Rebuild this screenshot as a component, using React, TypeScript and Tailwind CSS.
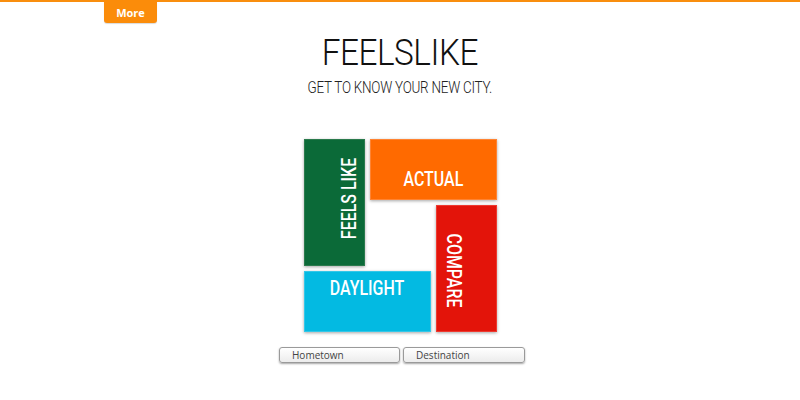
import React from "react";

export default function App() {
  return (
    <div className="relative h-[400px] w-[800px] overflow-hidden bg-white" style={{ fontFamily: "Roboto, sans-serif" }}>
      <div className="h-[2px] w-full bg-[#f98e0e]" />
      <div className="absolute left-[104px] top-0 flex h-[23px] w-[53px] items-center justify-center rounded-b-[3px] bg-[#fb8c0a] pt-[3px] text-[11px] font-bold text-white shadow-[0_1px_1px_rgba(0,0,0,0.15)]" style={{ fontFamily: "'Open Sans', sans-serif" }}>
        More
      </div>
      <div className="flex flex-col items-center pt-[29px]">
        <h1 className="scale-x-[0.9] text-[37px] font-light leading-[44px] tracking-[-0.5px] text-[#111]">FEELSLIKE</h1>
        <p className="mt-[2px] scale-x-[0.79] text-[17px] font-light leading-[20px] tracking-[-0.3px] text-[#222]">GET TO KNOW YOUR NEW CITY.</p>
        <div className="mt-[42px] grid grid-cols-[61px_61px_61px] grid-rows-[61px_61px_61px] gap-[5px]">
          <div className="col-start-1 row-span-2 row-start-1 flex items-center justify-center border border-[#2a7a4c] bg-[#0b6a38] shadow-[0_1px_3px_rgba(0,0,0,0.35)]">
            <span className="translate-x-[15px] -translate-y-[4px] -rotate-90 scale-x-[0.76] whitespace-nowrap text-[21px] font-medium leading-none text-white">FEELS LIKE</span>
          </div>
          <div className="col-span-2 col-start-2 row-start-1 flex items-center justify-center border border-[#ff8433] bg-[#ff6a00] shadow-[0_1px_3px_rgba(0,0,0,0.35)]">
            <span className="mt-[20px] scale-x-[0.76] text-[21px] font-medium leading-none text-white">ACTUAL</span>
          </div>
          <div className="col-start-3 row-span-2 row-start-2 flex items-center justify-center border border-[#ee3a30] bg-[#e3140a] shadow-[0_1px_3px_rgba(0,0,0,0.35)]">
            <span className="-translate-x-[12px] translate-y-[2px] rotate-90 scale-x-[0.76] whitespace-nowrap text-[21px] font-medium leading-none text-white">COMPARE</span>
          </div>
          <div className="col-span-2 col-start-1 row-start-3 flex items-start justify-center border border-[#33c7e8] bg-[#03bae2] shadow-[0_1px_3px_rgba(0,0,0,0.35)]">
            <span className="mt-[6px] scale-x-[0.76] text-[21px] font-medium leading-none text-white">DAYLIGHT</span>
          </div>
        </div>
        <div className="ml-[4px] mt-[15px] flex gap-[3px]" style={{ fontFamily: "'Open Sans', sans-serif" }}>
          <div className="flex h-[16px] w-[121px] items-center rounded-[3px] border border-[#9a9a9a] bg-gradient-to-b from-white to-[#ececec] pl-[12px] text-[10px] text-[#444] shadow-[0_1px_2px_rgba(0,0,0,0.35)]">Hometown</div>
          <div className="flex h-[16px] w-[122px] items-center rounded-[3px] border border-[#9a9a9a] bg-gradient-to-b from-white to-[#ececec] pl-[12px] text-[10px] text-[#444] shadow-[0_1px_2px_rgba(0,0,0,0.35)]">Destination</div>
        </div>
      </div>
    </div>
  );
}
